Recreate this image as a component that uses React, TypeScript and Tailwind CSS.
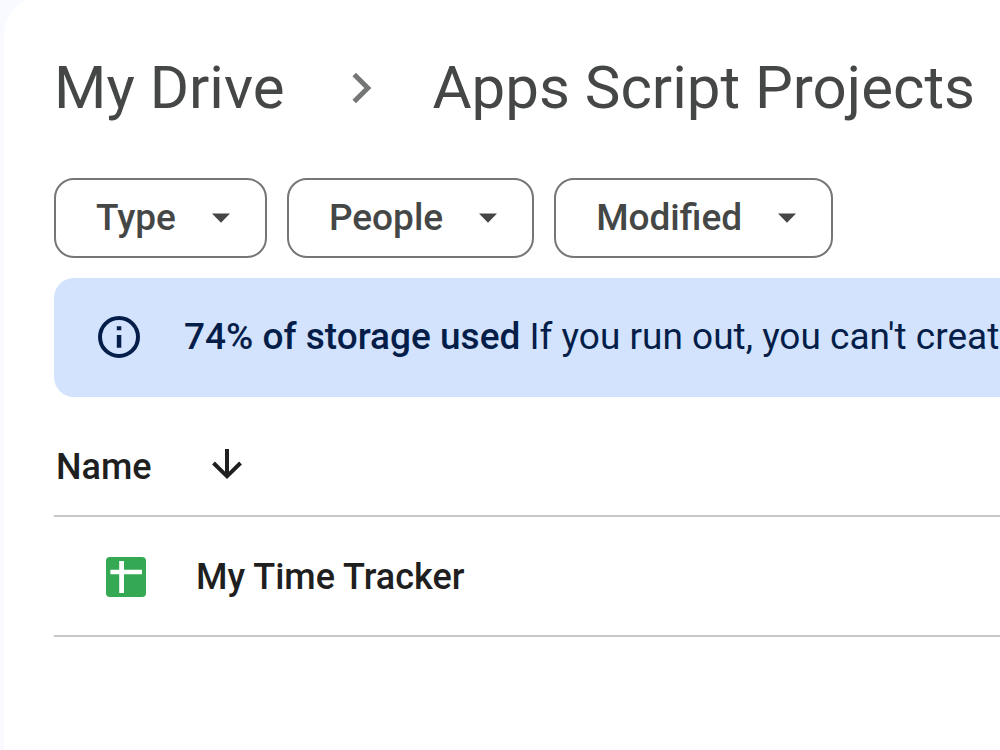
const filters = ["Type", "People", "Modified"];

function Breadcrumb() {
  return (
    <nav aria-label="Breadcrumb" className="flex h-20 items-center whitespace-nowrap text-[60px] leading-[80px] text-[#444746]">
      <a href="#drive">My Drive</a>
      <svg aria-hidden="true" className="ml-[68px] mr-[60px] h-8 w-5 shrink-0" viewBox="0 0 20 32" fill="none" stroke="#747775" strokeWidth="5">
        <path d="M2.2 2.5 15.8 16 2.2 29.5" />
      </svg>
      <a href="#projects" aria-current="page">Apps Script Projects</a>
    </nav>
  );
}

function FilterChip({ label }: { label: string }) {
  return (
    <button type="button" className="flex h-20 items-center gap-9 rounded-[20px] border-2 border-[#747775] pl-10 pr-[35px] text-[37px] font-medium text-[#444746]">
      {label}
      <svg aria-hidden="true" className="h-[10px] w-[18px]" viewBox="0 0 18 10">
        <path d="M0 0.5H18L9 9.7Z" fill="#444746" />
      </svg>
    </button>
  );
}

function StorageBanner() {
  return (
    <section className="flex h-[119px] items-center gap-11 overflow-hidden whitespace-nowrap rounded-l-[20px] bg-[#d3e3fd] pb-px pl-11 text-[37px] text-[#041e49]">
      <svg aria-hidden="true" className="size-[42px] shrink-0" viewBox="0 0 42 42">
        <circle cx="21" cy="21" r="19" fill="none" stroke="#041e49" strokeWidth="4" />
        <path d="M18.8 10.2h4.5v4h-4.5zM18.8 19h4.5v12.8h-4.5z" fill="#041e49" />
      </svg>
      <p>
        <strong className="font-medium">74% of storage used</strong> If you run out, you can't create
      </p>
    </section>
  );
}

function FileTable() {
  return (
    <table className="w-full border-collapse text-left text-[36px] font-medium text-[#1f1f1f]">
      <thead>
        <tr className="h-[119px] border-b-2 border-[#c7c7c7]">
          <th scope="col" aria-sort="descending" className="p-0 pl-[2px] pt-[22px] font-medium">
            <button type="button" className="flex items-center gap-[60px]">
              Name
              <svg aria-hidden="true" className="h-[36px] w-[30px]" viewBox="0 0 30 36" fill="none" stroke="#1f1f1f" strokeWidth="4">
                <path d="M15 0V27M1.5 14 15 27.3 28.5 14" />
              </svg>
            </button>
          </th>
        </tr>
      </thead>
      <tbody>
        <tr className="h-[120px] border-b-2 border-[#c7c7c7]">
          <td className="p-0 pl-[52px] pt-[2px]">
            <a href="#time-tracker" className="flex items-center gap-[50px]">
              <svg aria-hidden="true" className="size-10" viewBox="0 0 40 40">
                <rect width="40" height="40" rx="4" fill="#34a853" />
                <path d="M13.2 4h4.8v8.8h18v4.4H18V36h-4.8V17.2H4.4v-4.4h8.8z" fill="#fff" />
              </svg>
              My Time Tracker
            </a>
          </td>
        </tr>
      </tbody>
    </table>
  );
}

export default function App() {
  return (
    <div className="min-h-screen overflow-hidden bg-[#f8faff] pl-1 font-['Roboto',sans-serif]">
      <main className="-mt-1 min-h-[calc(100vh+4px)] rounded-tl-[40px] bg-white pl-[50px] pt-[52px]">
        <Breadcrumb />
        <div className="mt-[50px] flex gap-5">
          {filters.map((label) => (
            <FilterChip key={label} label={label} />
          ))}
        </div>
        <div className="mt-5">
          <StorageBanner />
        </div>
        <FileTable />
      </main>
    </div>
  );
}
